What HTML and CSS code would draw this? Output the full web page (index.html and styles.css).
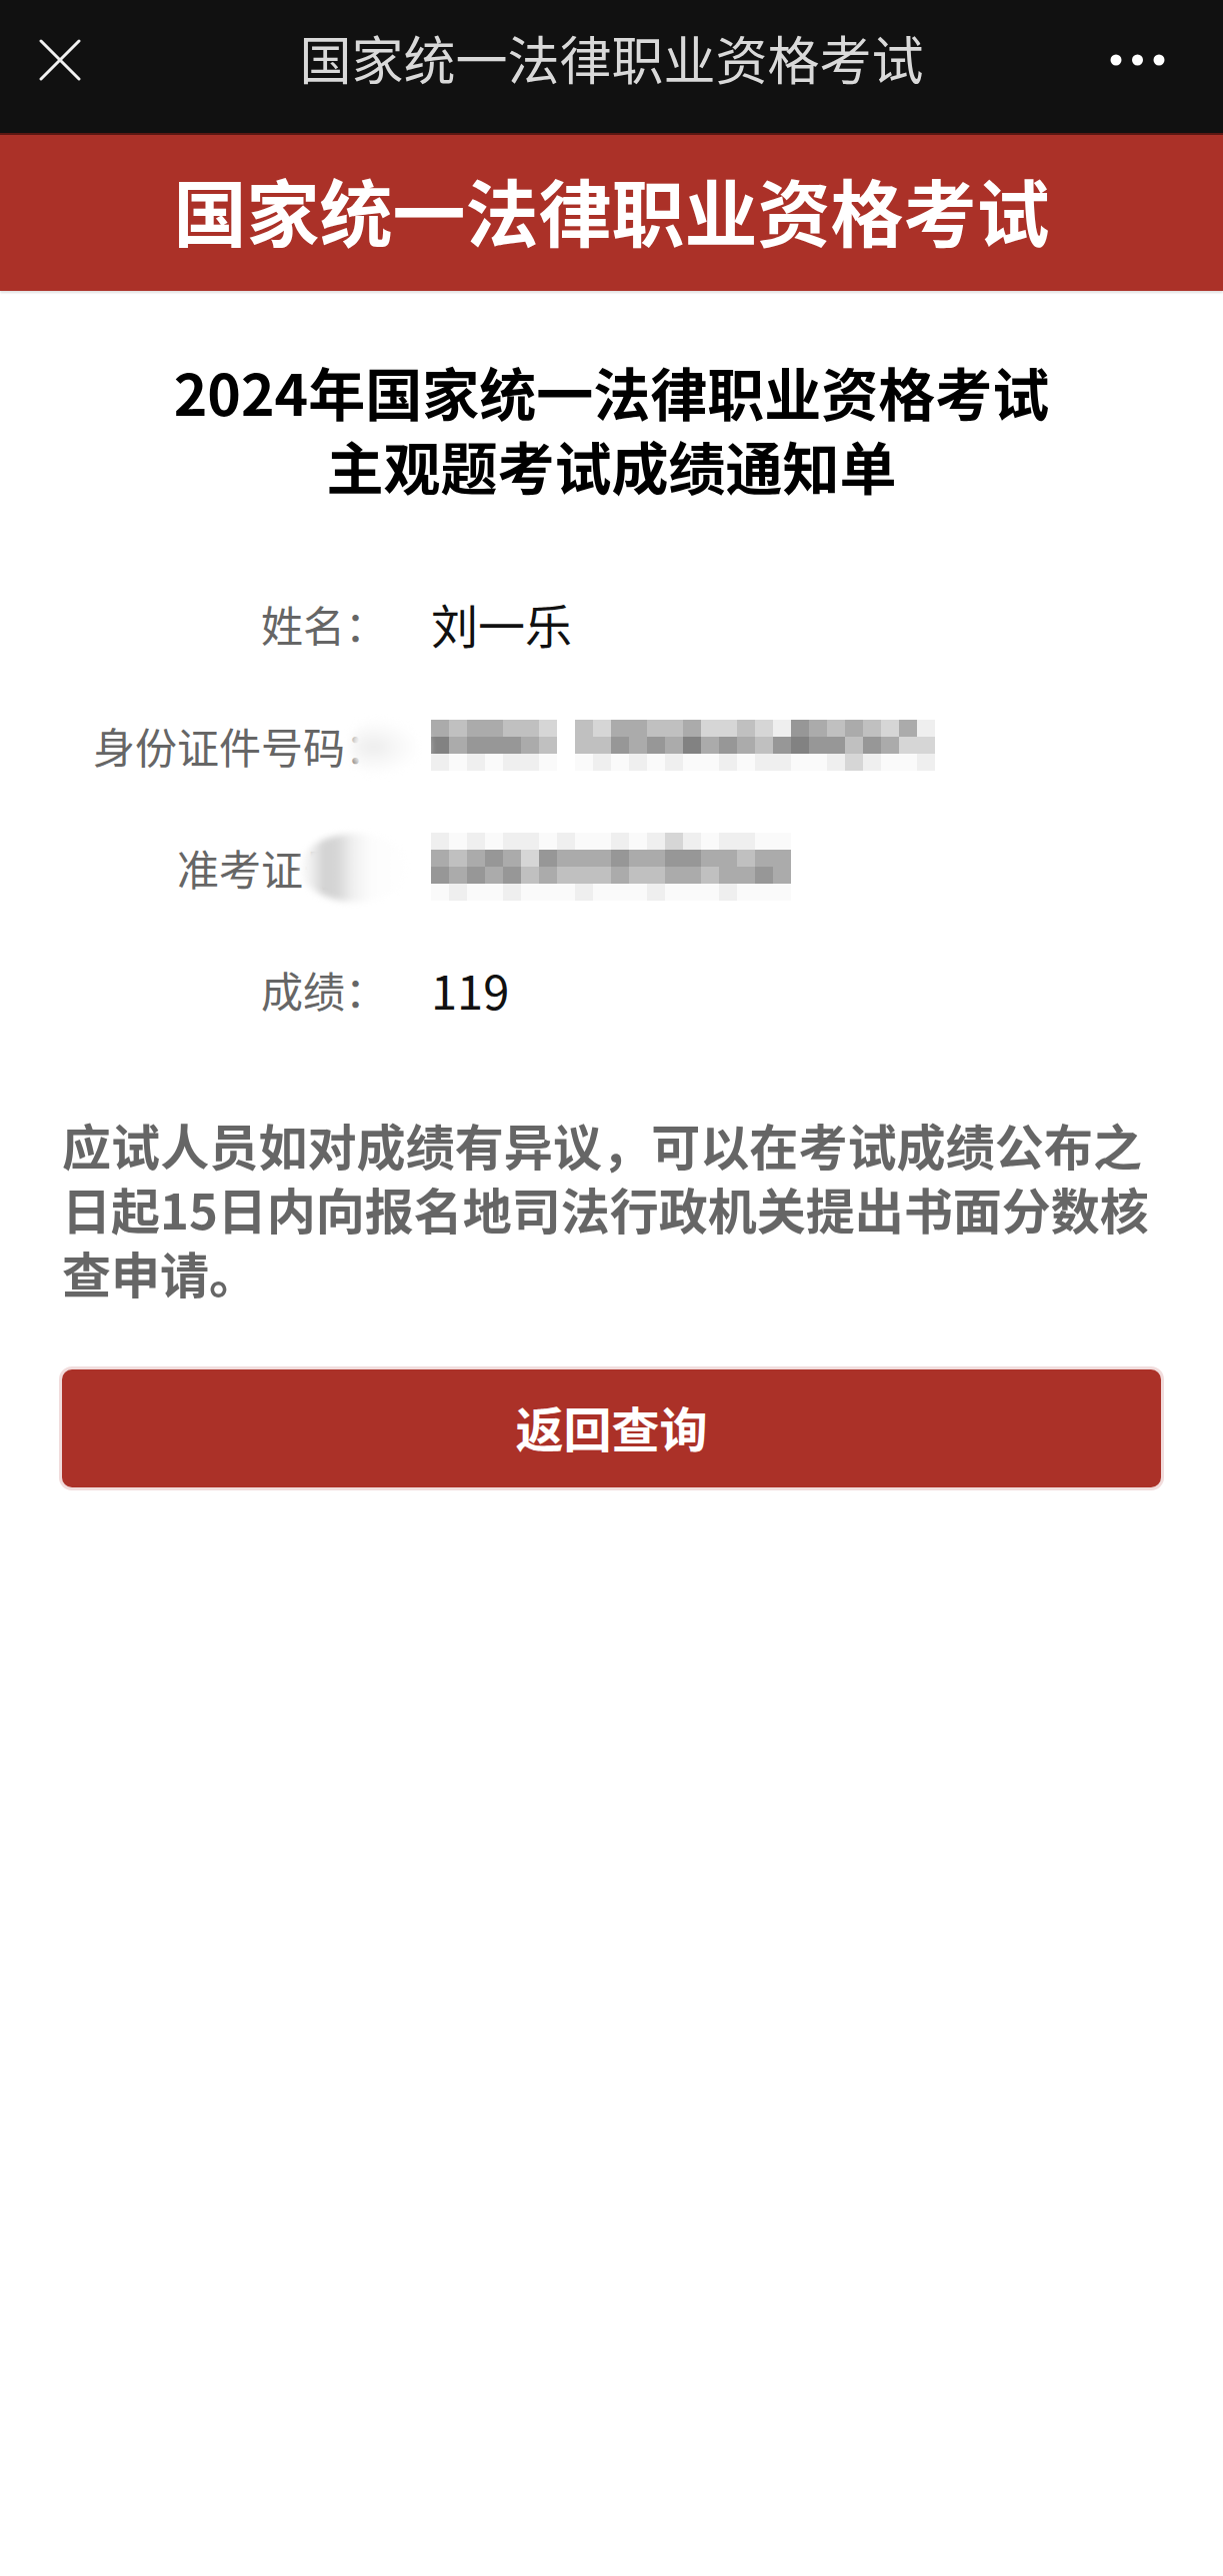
FILE: index.html
```html
<!DOCTYPE html>
<html lang="zh-CN">
<head>
<meta charset="utf-8">
<title>国家统一法律职业资格考试</title>
<link rel="stylesheet" href="styles.css">
</head>
<body>
<div class="page">
  <header class="topbar">
    <div class="tb-left">
      <svg class="close-icon" width="42" height="42" viewBox="0 0 42 42">
        <line x1="2" y1="2" x2="40" y2="40" stroke="#f2f2f2" stroke-width="3" stroke-linecap="round"/>
        <line x1="40" y1="2" x2="2" y2="40" stroke="#f2f2f2" stroke-width="3" stroke-linecap="round"/>
      </svg>
    </div>
    <div class="tb-title">国家统一法律职业资格考试</div>
    <div class="tb-right">
      <svg class="more-icon" width="56" height="12" viewBox="0 0 56 12">
        <circle cx="6" cy="6" r="5.5" fill="#fff"/>
        <circle cx="27.5" cy="6" r="5.5" fill="#fff"/>
        <circle cx="49" cy="6" r="5.5" fill="#fff"/>
      </svg>
    </div>
  </header>

  <div class="banner">国家统一法律职业资格考试</div>

  <h1 class="doc-title">
    <span class="t1">2024年国家统一法律职业资格考试</span>
    <span class="t2">主观题考试成绩通知单</span>
  </h1>

  <div class="rows">
    <div class="row">
      <div class="label">姓名：</div>
      <div class="value">刘一乐</div>
    </div>
    <div class="row">
      <div class="label">身份证件号码：</div>
      <div class="value">
        <div class="mosaic">
          <div class="mrow">
            <i class="g5"></i><i class="g4"></i><i class="g5"></i><i class="g5"></i><i class="g4"></i><i class="g4"></i><i class="g3"></i><i class="g0"></i>
            <i class="g4"></i><i class="g3"></i><i class="g5"></i><i class="g5"></i><i class="g4"></i><i class="g4"></i><i class="g5"></i><i class="g3"></i><i class="g3"></i><i class="g4"></i><i class="g3"></i><i class="g2"></i><i class="g6"></i><i class="g5"></i><i class="g4"></i><i class="g5"></i><i class="g4"></i><i class="g3"></i><i class="g5"></i><i class="g2"></i>
          </div>
          <div class="mrow">
            <i class="g7"></i><i class="g5"></i><i class="g6"></i><i class="g6"></i><i class="g6"></i><i class="g5"></i><i class="g4"></i><i class="g0"></i>
            <i class="g4"></i><i class="g4"></i><i class="g6"></i><i class="g5"></i><i class="g6"></i><i class="g5"></i><i class="g7"></i><i class="g5"></i><i class="g6"></i><i class="g5"></i><i class="g4"></i><i class="g6"></i><i class="g7"></i><i class="g6"></i><i class="g6"></i><i class="g4"></i><i class="g6"></i><i class="g5"></i><i class="g3"></i><i class="g3"></i>
          </div>
          <div class="mrow">
            <i class="g2"></i><i class="g1"></i><i class="g2"></i><i class="g1"></i><i class="g2"></i><i class="g2"></i><i class="g1"></i><i class="g0"></i>
            <i class="g1"></i><i class="g2"></i><i class="g1"></i><i class="g2"></i><i class="g1"></i><i class="g2"></i><i class="g1"></i><i class="g1"></i><i class="g2"></i><i class="g1"></i><i class="g2"></i><i class="g2"></i><i class="g1"></i><i class="g1"></i><i class="g2"></i><i class="g3"></i><i class="g2"></i><i class="g1"></i><i class="g1"></i><i class="g2"></i>
          </div>
        </div>
      </div>
      <div class="smear smear-id"></div>
    </div>
    <div class="row">
      <div class="label">准考证号：</div>
      <div class="value">
        <div class="mosaic">
          <div class="mrow">
            <i class="g2"></i><i class="g1"></i><i class="g2"></i><i class="g1"></i><i class="g2"></i><i class="g2"></i><i class="g1"></i><i class="g2"></i><i class="g1"></i><i class="g1"></i><i class="g2"></i><i class="g1"></i><i class="g2"></i><i class="g3"></i><i class="g2"></i><i class="g1"></i><i class="g2"></i><i class="g2"></i><i class="g1"></i><i class="g1"></i>
          </div>
          <div class="mrow">
            <i class="g5"></i><i class="g4"></i><i class="g5"></i><i class="g6"></i><i class="g5"></i><i class="g3"></i><i class="g6"></i><i class="g5"></i><i class="g5"></i><i class="g5"></i><i class="g6"></i><i class="g5"></i><i class="g5"></i><i class="g6"></i><i class="g6"></i><i class="g5"></i><i class="g5"></i><i class="g4"></i><i class="g5"></i><i class="g5"></i>
          </div>
          <div class="mrow">
            <i class="g6"></i><i class="g5"></i><i class="g6"></i><i class="g5"></i><i class="g6"></i><i class="g4"></i><i class="g5"></i><i class="g4"></i><i class="g4"></i><i class="g4"></i><i class="g5"></i><i class="g4"></i><i class="g4"></i><i class="g5"></i><i class="g5"></i><i class="g4"></i><i class="g5"></i><i class="g5"></i><i class="g6"></i><i class="g5"></i>
          </div>
          <div class="mrow">
            <i class="g1"></i><i class="g2"></i><i class="g1"></i><i class="g1"></i><i class="g2"></i><i class="g1"></i><i class="g1"></i><i class="g1"></i><i class="g2"></i><i class="g1"></i><i class="g1"></i><i class="g1"></i><i class="g2"></i><i class="g1"></i><i class="g1"></i><i class="g1"></i><i class="g2"></i><i class="g1"></i><i class="g1"></i><i class="g1"></i>
          </div>
        </div>
      </div>
      <div class="smear smear-zk"></div>
    </div>
    <div class="row">
      <div class="label">成绩：</div>
      <div class="value">119</div>
    </div>
  </div>

  <p class="notice">
    <span class="line full">应试人员如对成绩有异议，可以在考试成绩公布之</span>
    <span class="line full">日起15日内向报名地司法行政机关提出书面分数核</span>
    <span class="line">查申请。</span>
  </p>

  <div class="btn">返回查询</div>
</div>
</body>
</html>
```

FILE: styles.css
```css
* {
  box-sizing: border-box;
}

html, body {
  margin: 0;
  padding: 0;
  background: #ffffff;
}

body {
  font-family: "Noto Sans CJK SC", "Noto Sans", sans-serif;
  width: 1223px;
  min-height: 2577px;
}

.page {
  width: 1223px;
}

.topbar {
  height: 133px;
  padding-bottom: 13px;
  background: #111111;
  display: grid;
  grid-template-columns: 1fr auto 1fr;
  align-items: center;
}

.tb-left {
  padding-left: 39px;
  display: flex;
  align-items: center;
}

.close-icon {
  display: block;
}

.tb-title {
  color: #d9d9d9;
  font-size: 52px;
  line-height: 1;
  font-weight: 400;
  padding-bottom: 4px;
}

.tb-right {
  display: flex;
  justify-content: flex-end;
  padding-right: 57px;
}

.more-icon {
  display: block;
}

.banner {
  height: 158px;
  background: #ab3128;
  border-top: 2px solid #5c1712;
  box-shadow: 0 2px 2px rgba(0, 0, 0, 0.12);
  color: #ffffff;
  font-size: 73px;
  font-weight: 700;
  display: flex;
  align-items: center;
  justify-content: center;
  padding-bottom: 8px;
}

.doc-title {
  margin: 0;
  padding-top: 63px;
  text-align: center;
  font-size: 57px;
  font-weight: 700;
  line-height: 74px;
  color: #000000;
}

.doc-title span {
  display: block;
}

.rows {
  margin-top: 60px;
}

.row {
  position: relative;
  height: 122px;
  display: grid;
  grid-template-columns: 387px 1fr;
  column-gap: 44px;
  align-items: center;
}

.label {
  text-align: right;
  font-size: 42px;
  color: #666666;
  white-space: nowrap;
}

.value {
  font-size: 47px;
  color: #111111;
}

.mosaic {
  display: flex;
  flex-direction: column;
}

.mrow {
  display: flex;
}

.mrow i {
  display: block;
  width: 18px;
  height: 17px;
}

.g0 { background: #ffffff; }
.g1 { background: #fafafa; }
.g2 { background: #efefef; }
.g3 { background: #d6d6d6; }
.g4 { background: #c0c0c0; }
.g5 { background: #ababab; }
.g6 { background: #979797; }
.g7 { background: #828282; }

.smear {
  position: absolute;
  border-radius: 50%;
  pointer-events: none;
}

.smear-id {
  left: 350px;
  top: 30px;
  width: 78px;
  height: 66px;
  background: radial-gradient(ellipse at 30% 50%, #ececec 0, #f7f7f7 30%, #ffffff 60%);
  filter: blur(4px);
}

.smear-zk {
  left: 300px;
  top: 28px;
  width: 110px;
  height: 68px;
  background: linear-gradient(to right, #ffffff 0, #ebebeb 12%, #d2d2d2 22%, #d6d6d6 34%, #f0f0f0 48%, #fcfcfc 64%, #ffffff 100%);
  filter: blur(3px);
}

.notice {
  margin: 63px 81px 0 62px;
  font-size: 49px;
  font-weight: 700;
  line-height: 64px;
  color: #666666;
}

.notice .line {
  display: block;
  white-space: nowrap;
}

.notice .line.full {
  text-align: justify;
  text-align-last: justify;
}

.btn {
  margin: 65px 62px 0 62px;
  height: 118px;
  background: #ab3128;
  border-radius: 10px;
  box-shadow: 0 0 0 3px #f1dcdc;
  color: #ffffff;
  font-size: 48px;
  font-weight: 700;
  display: flex;
  align-items: center;
  justify-content: center;
  padding-bottom: 4px;
}
```
